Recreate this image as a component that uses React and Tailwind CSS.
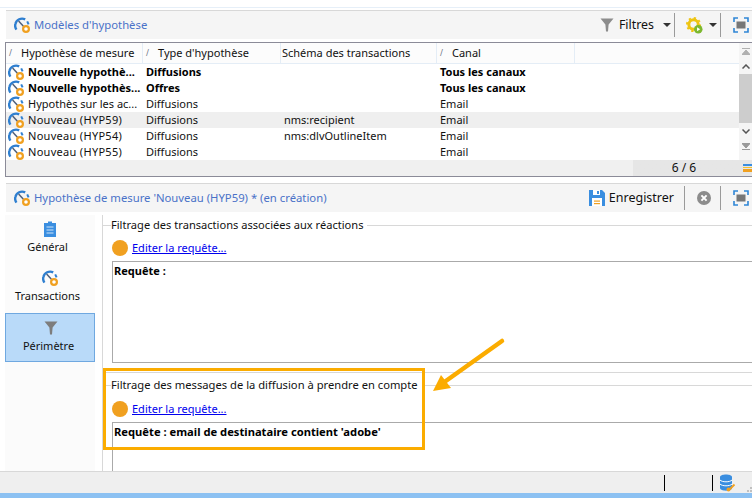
import React from "react";

const GaugeIcon = ({ className }) => (
  <svg viewBox="0 0 16 16" className={className}>
    <path d="M2.4 12.6 A6.6 6.6 0 0 1 1.4 7 A6.8 6.8 0 0 1 11.2 2.4" fill="none" stroke="#2f7fd0" strokeWidth="2.4" />
    <path d="M13.2 4.4 L14.6 7.4" fill="none" stroke="#2f7fd0" strokeWidth="2" />
    <path d="M4.6 4 L9.4 9.2" fill="none" stroke="#50607a" strokeWidth="1.5" />
    <circle cx="12" cy="12" r="2.9" fill="#fff" stroke="#f0a020" strokeWidth="2.2" />
  </svg>
);

const Funnel = ({ className, color = "#8c8c8c" }) => (
  <svg viewBox="0 0 14 14" className={className}>
    <path d="M0.5 0.5 H13.5 L8.6 6.5 L8 13.5 H6 L5.4 6.5 Z" fill={color} />
  </svg>
);

const Caret = () => (
  <svg viewBox="0 0 8 4" className="w-2 h-1">
    <path d="M0 0 H8 L4 4 Z" fill="#333" />
  </svg>
);

const FocusIcon = () => (
  <svg viewBox="0 0 16 16" className="w-4 h-4">
    <path d="M1 5 V1 H5 M11 1 H15 V5 M15 11 V15 H11 M5 15 H1 V11" fill="none" stroke="#2f86d6" strokeWidth="1.6" />
    <rect x="3.5" y="4.5" width="9" height="7" fill="#777" />
  </svg>
);

const GearPlay = () => (
  <svg viewBox="0 0 18 18" className="w-[17px] h-[17px]">
    <circle cx="8" cy="8" r="5" fill="none" stroke="#eec411" strokeWidth="3.2" />
    <circle cx="8" cy="8" r="7" fill="none" stroke="#eec411" strokeWidth="2" strokeDasharray="2.4 3.1" />
    <circle cx="13" cy="13" r="4.5" fill="#7cb82f" />
    <path d="M11.7 10.8 L15 13 L11.7 15.2 Z" fill="#fff" />
  </svg>
);

const SaveIcon = () => (
  <svg viewBox="0 0 16 16" className="w-4 h-4">
    <path d="M0 0 H13 L16 3 V16 H0 Z" fill="#3a8ee0" />
    <rect x="4" y="0" width="7" height="5" fill="#fff" />
    <rect x="8" y="1" width="2" height="3" fill="#3a8ee0" />
    <rect x="3" y="8" width="10" height="8" fill="#fff" />
    <rect x="5" y="10.5" width="6" height="1.2" fill="#f0a020" />
    <rect x="5" y="13" width="6" height="1.2" fill="#f0a020" />
  </svg>
);

const CloseIcon = () => (
  <svg viewBox="0 0 14 14" className="w-3.5 h-3.5">
    <circle cx="7" cy="7" r="7" fill="#8c8c8c" />
    <path d="M4.4 4.4 L9.6 9.6 M9.6 4.4 L4.4 9.6" stroke="#fff" strokeWidth="2" />
  </svg>
);

const ClipboardIcon = () => (
  <svg viewBox="0 0 12 16" className="w-3 h-4">
    <path d="M0 2 H4 V0.5 H8 V2 H12 V16 H0 Z" fill="#3a8ee0" />
    <path d="M2.5 6 H9.5 M2.5 9 H9.5 M2.5 12 H9.5" stroke="#cfe4f8" strokeWidth="1" />
  </svg>
);

const DbIcon = () => (
  <svg viewBox="0 0 16 18" className="w-4 h-[18px]">
    <path d="M0 3 C0 -0.5 12 -0.5 12 3 V14 C12 17.5 0 17.5 0 14 Z" fill="#3a8ee0" />
    <path d="M0 6 C2 8.4 10 8.4 12 6 M0 10 C2 12.4 10 12.4 12 10" fill="none" stroke="#fff" strokeWidth="1" />
    <path d="M9 16 L14.5 10.5" stroke="#f0a020" strokeWidth="1.8" />
    <circle cx="8.5" cy="15.5" r="2" fill="#f0a020" />
  </svg>
);

const rows = [
  { name: "Nouvelle hypothè...", type: "Diffusions", schema: "", canal: "Tous les canaux", bold: true },
  { name: "Nouvelle hypothès...", type: "Offres", schema: "", canal: "Tous les canaux", bold: true },
  { name: "Hypothès sur les ac...", type: "Diffusions", schema: "", canal: "Email" },
  { name: "Nouveau (HYP59)", type: "Diffusions", schema: "nms:recipient", canal: "Email", selected: true, wide: true },
  { name: "Nouveau (HYP54)", type: "Diffusions", schema: "nms:dlvOutlineItem", canal: "Email", wide: true },
  { name: "Nouveau (HYP55)", type: "Diffusions", schema: "", canal: "Email", wide: true },
];

const SortMark = () => <span className="text-[8px] text-gray-500 w-[13px] shrink-0 pl-px">/</span>;

const Separator = () => <div className="w-px h-6 bg-[#9a9a9a]" />;

const App = () => {
  return (
    <div className="relative w-[752px] h-[498px] overflow-hidden bg-white flex flex-col text-[11px] leading-4 text-[#111] font-['Noto_Sans',sans-serif]">
      <div className="h-[8px] shrink-0 border-b border-[#e6eff8]" />

      {/* Models toolbar */}
      <div className="mt-[2px] ml-[6px] h-[29px] shrink-0 border-t border-[#d8d8d8] bg-[#f5f5f5] flex items-center pl-2">
        <GaugeIcon className="w-4 h-4 mr-[4px]" />
        <span className="text-[#4a72c8] text-[11.3px]">Modèles d'hypothèse</span>
        <div className="ml-auto flex items-center">
          <Funnel className="w-3.5 h-3.5 mr-[5px]" />
          <span className="mr-[9px] text-[12.4px]">Filtres</span>
          <Caret />
          <div className="w-[3px]" />
          <Separator />
          <div className="w-[11px]" />
          <GearPlay />
          <div className="w-[6px]" />
          <Caret />
          <div className="w-[3px]" />
          <Separator />
          <div className="w-[12px]" />
          <FocusIcon />
          <div className="w-[3px]" />
        </div>
      </div>

      {/* Grid */}
      <div className="mt-[3px] ml-[5px] h-[135px] shrink-0 border-y-[1.5px] border-l-[1.5px] border-[#8b8b98] flex flex-col">
        <div className="flex flex-1 min-h-0">
          <div className="w-[733px] shrink-0 flex flex-col">
            <div className="h-[21px] shrink-0 flex items-center border-b border-[#e4edf6] bg-[#fcfcfc] whitespace-nowrap">
              <div className="w-[137px] h-full flex items-center border-r border-[#e4edf6] pl-[2px]">
                <SortMark />
                <span>Hypothèse de mesure</span>
              </div>
              <div className="w-[138px] h-full flex items-center border-r border-[#e4edf6] pl-[2px]">
                <SortMark />
                <span>Type d'hypothèse</span>
              </div>
              <div className="w-[156px] h-full flex items-center border-r border-[#e4edf6] pl-px">Schéma des transactions</div>
              <div className="w-[138px] h-full flex items-center border-r border-[#e4edf6] pl-[2px]">
                <SortMark />
                <span>Canal</span>
              </div>
            </div>
            {rows.map((row) => (
              <div
                key={row.name}
                className={`h-4 shrink-0 flex items-center ${row.selected ? "bg-[#efefef]" : ""} ${row.bold ? "font-bold text-black" : ""}`}
              >
                <div className="w-[137px] flex items-center pl-[2px] whitespace-nowrap">
                  <GaugeIcon className="w-4 h-4 mr-[4px] shrink-0" />
                  <span className={row.wide ? "tracking-[0.3px]" : ""}>{row.name}</span>
                </div>
                <div className="w-[140px] pl-[3px]">{row.type}</div>
                <div className="w-[154px] pl-[1px]">{row.schema}</div>
                <div className="pl-[3px]">{row.canal}</div>
              </div>
            ))}
            <div className="flex-1 bg-[#f0f0f0]" />
          </div>
          <div className="flex-1 flex flex-col items-center bg-[#f5f5f5] pt-[5px]">
            <svg viewBox="0 0 8 7" className="w-2 h-[7px]">
              <path d="M0 0.5 H8 M4 2 L8 6.5 H0 Z" stroke="#b0b0b0" fill="#b0b0b0" />
            </svg>
            <svg viewBox="0 0 8 5" className="w-2 h-[5px] mt-[9px]">
              <path d="M0.5 4.5 L4 1 L7.5 4.5" fill="none" stroke="#555" strokeWidth="1.5" />
            </svg>
            <div className="w-full h-[49px] mt-[5px] bg-[#cdcdcd]" />
            <svg viewBox="0 0 8 5" className="w-2 h-[5px] mt-[6px]">
              <path d="M0.5 0.5 L4 4 L7.5 0.5" fill="none" stroke="#555" strokeWidth="1.5" />
            </svg>
            <svg viewBox="0 0 8 7" className="w-2 h-[7px] mt-[9px]">
              <path d="M0 0.5 H8 L4 5 Z M0 6.5 H8" stroke="#999" fill="#999" />
            </svg>
          </div>
        </div>
        <div className="h-[16px] shrink-0 flex items-center bg-gradient-to-r from-[#f0f0f0] from-[84%] to-[#e6e6e6] to-[84%]">
          <span className="ml-[658px] w-[40px] text-center text-[12px]">6 / 6</span>
          <div className="ml-auto w-[9px] flex flex-col gap-px">
            <div className="h-[1.5px] bg-[#3a8ee0]" />
            <div className="h-[1.5px] bg-[#f2c230]" />
            <div className="h-[3px] bg-[#f0a020]" />
          </div>
        </div>
      </div>

      {/* Detail toolbar */}
      <div className="mt-[6px] ml-[6px] h-[29px] shrink-0 border-t border-[#d8d8d8] bg-[#f5f5f5] flex items-center pl-2">
        <GaugeIcon className="w-4 h-4 mr-[4px]" />
        <span className="text-[#4a72c8] text-[11.3px]">Hypothèse de mesure 'Nouveau (HYP59) * (en création)</span>
        <div className="ml-auto flex items-center">
          <SaveIcon />
          <span className="ml-[4px] mr-[10px] text-[12.5px]">Enregistrer</span>
          <Separator />
          <div className="w-[12px]" />
          <CloseIcon />
          <div className="w-[9px]" />
          <Separator />
          <div className="w-[12px]" />
          <FocusIcon />
          <div className="w-[3px]" />
        </div>
      </div>

      {/* Body */}
      <div className="flex flex-1 min-h-0 mt-[3px]">
        <div className="w-[90px] ml-[5px] shrink-0 bg-[#fbfbfb] flex flex-col items-stretch">
          <div className="h-[49px] flex flex-col items-center pt-[6px] gap-[2px]">
            <ClipboardIcon />
            <span className="pr-[5px]">Général</span>
          </div>
          <div className="h-[49px] flex flex-col items-center pt-[6px] gap-[2px]">
            <GaugeIcon className="w-4 h-4" />
            <span className="pr-[5px]">Transactions</span>
          </div>
          <div className="h-[49px] border border-[#6fa8e0] bg-[#b9daf9] flex flex-col items-center pt-[7px] gap-[3px]">
            <Funnel className="w-3.5 h-3.5 ml-px" color="#7d7d7d" />
            <span className="pr-[3px]">Périmètre</span>
          </div>
        </div>

        <div className="ml-[7px] flex-1 min-w-0 border-l border-[#d8d8d8] flex flex-col">
          <div className="flex items-center h-4 mt-[2px]">
            <div className="w-2 h-px bg-[#d8d8d8]" />
            <span className="text-[11.1px]">Filtrage des transactions associées aux réactions</span>
            <div className="flex-1 h-px bg-[#d8d8d8] ml-1" />
          </div>
          <div className="flex items-center ml-[9px] mt-[7px] h-4">
            <div className="w-4 h-4 rounded-full bg-[#f0a020]" />
            <a className="ml-1 text-[#0000ee] underline">Editer la requête...</a>
          </div>
          <div className="ml-[9px] mt-[5px] h-[102px] shrink-0 border border-r-0 border-[#aaaaaa] px-px pt-px font-bold text-black">Requête :</div>
          <div className="mt-[9px] h-px shrink-0 bg-[#d8d8d8]" />
          <div className="flex items-center h-4 mt-[4px]">
            <div className="w-2 h-px bg-[#d8d8d8]" />
            <span className="text-[11.2px]">Filtrage des messages de la diffusion à prendre en compte</span>
            <div className="flex-1 h-px bg-[#d8d8d8] ml-1" />
          </div>
          <div className="flex items-center ml-[9px] mt-[8px] h-4">
            <div className="w-4 h-4 rounded-full bg-[#f0a020]" />
            <a className="ml-1 text-[#0000ee] underline">Editer la requête...</a>
          </div>
          <div className="ml-[9px] mt-[5px] flex-1 border-t border-l border-[#aaaaaa] px-px pt-px font-bold text-black text-[11.2px]">
            Requête : email de destinataire contient 'adobe'
          </div>
        </div>
      </div>

      {/* Status bar */}
      <div className="h-[22px] shrink-0 border-t border-[#d8d8d8] bg-[#efefef] flex items-center">
        <div className="ml-[664px] w-px h-4 bg-black" />
        <div className="ml-[47px] w-px h-4 bg-black" />
        <div className="ml-[7px]">
          <DbIcon />
        </div>
        <svg viewBox="0 0 5 5" className="w-[5px] h-[5px] ml-auto self-end mb-px">
          <path d="M3 0 H5 V2 H3 Z M0 3 H2 V5 H0 Z M3 3 H5 V5 H3 Z" fill="#c0c0c0" />
        </svg>
      </div>
      <div className="h-[5px] shrink-0 bg-[#8cc1f2]" />

      {/* Annotation */}
      <div className="absolute left-[103px] top-[368px] w-[322px] h-[82px] border-[3px] border-[#fbac00]" />
      <svg viewBox="0 0 752 498" className="absolute inset-0 w-[752px] h-[498px] pointer-events-none">
        <path d="M502 341 L443 383" stroke="#fbac00" strokeWidth="4.5" strokeLinecap="round" />
        <path d="M433 391 L441 375 L451 388 Z" fill="#fbac00" />
      </svg>
    </div>
  );
};

export default App;
